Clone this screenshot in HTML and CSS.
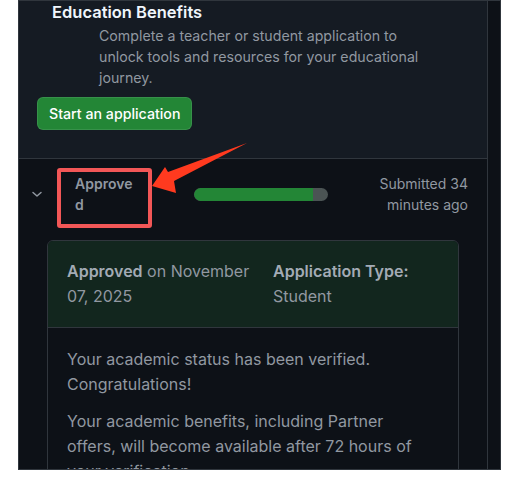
FILE: index.html
```html
<!DOCTYPE html>
<html lang="en">

<head>
    <meta charset="UTF-8">
    <meta name="viewport" content="width=device-width, initial-scale=1.0">
    <title>Education Benefits</title>
    <link rel="stylesheet" href="styles.css">
</head>

<body>
    <div class="shot">
        <div class="frame">
            <div class="box">
                <section class="intro">
                    <h2>Education Benefits</h2>
                    <p class="intro-text">Complete a teacher or student application to unlock tools and resources for your educational journey.</p>
                    <button class="btn-primary" type="button">Start an application</button>
                </section>

                <section class="app-row">
                    <div class="app-summary">
                        <svg class="chevron" width="16" height="16" viewBox="0 0 16 16" aria-hidden="true">
                            <path d="M4 6.5l4 3.5 4-3.5" fill="none" stroke="currentColor" stroke-width="1.5" stroke-linecap="round" stroke-linejoin="round"/>
                        </svg>
                        <span class="status">Approved</span>
                        <div class="progress">
                            <span class="progress-fill" style="width: 89%"></span>
                        </div>
                        <span class="submitted">Submitted 34 minutes ago</span>
                    </div>

                    <div class="app-card">
                        <div class="app-card-header">
                            <div><strong>Approved</strong> on November 07, 2025</div>
                            <div><strong>Application Type:</strong><br>Student</div>
                        </div>
                        <div class="app-card-body">
                            <p>Your academic status has been verified. Congratulations!</p>
                            <p>Your academic benefits, including Partner offers, will become available after 72 hours of your verification.</p>
                        </div>
                    </div>
                </section>
            </div>
        </div>

        <div class="mark-box"></div>
        <svg class="mark-arrow" width="528" height="492" viewBox="0 0 528 492" aria-hidden="true">
            <polygon points="152,186 165,167 168,172 247,143 174,181 176,193" fill="#ff3a1f"/>
        </svg>
    </div>
</body>

</html>
```

FILE: styles.css
```css
:root {
    --canvas: #0d1117;
    --canvas-subtle: #151b23;
    --border: #30363d;
    --text: #f0f6fc;
    --muted: #9198a1;
    --green: #238636;
    --success-bg: #12261e;
    --mark: #f25757;
}

body {
    margin: 0;
    background: #ffffff;
    font-family: 'Inter', 'Liberation Sans', sans-serif;
}

.shot {
    position: relative;
    width: 528px;
    height: 492px;
}

.frame {
    margin-left: 18px;
    width: 483px;
    height: 470px;
    box-sizing: border-box;
    background: var(--canvas);
    border: 1px solid var(--border);
    overflow: hidden;
}

.box {
    width: 468px;
    border-right: 1px solid var(--border);
    min-height: 100%;
}

.intro {
    background: var(--canvas-subtle);
    padding: 0 0 28px 33px;
    border-bottom: 1px solid var(--border);
}

.intro h2 {
    margin: 0;
    font-size: 16.5px;
    line-height: 22px;
    font-weight: 600;
    color: var(--text);
}

.intro-text {
    margin: 2px 0 9px 47px;
    width: 330px;
    font-size: 14.2px;
    line-height: 21px;
    color: var(--muted);
}

.btn-primary {
    display: block;
    margin-left: -15px;
    height: 33px;
    padding: 0 11px;
    background: var(--green);
    border: 1px solid rgba(240, 246, 252, 0.1);
    border-radius: 6px;
    color: #ffffff;
    font-family: inherit;
    font-size: 14.2px;
    font-weight: 500;
}

.app-row {
    padding: 14px 28px 0 28px;
}

.app-summary {
    display: flex;
    align-items: center;
    margin: 0 -9px 0 -18px;
}

.chevron {
    flex: none;
    color: var(--muted);
}

.status {
    width: 62px;
    margin-left: 30px;
    font-size: 14px;
    line-height: 21px;
    font-weight: 600;
    color: var(--muted);
    word-break: break-all;
}

.progress {
    width: 134px;
    height: 13px;
    margin-left: 57px;
    border-radius: 7px;
    background: #4b5454;
    overflow: hidden;
}

.progress-fill {
    display: block;
    height: 100%;
    background: var(--green);
    border-radius: 7px 0 0 7px;
}

.submitted {
    margin-left: auto;
    width: 100px;
    text-align: right;
    font-size: 14px;
    line-height: 21px;
    color: var(--muted);
}

.app-card {
    margin-top: 25px;
    border: 1px solid var(--border);
    border-radius: 6px;
    overflow: hidden;
}

.app-card-header {
    display: grid;
    grid-template-columns: 186px 1fr;
    gap: 20px;
    padding: 18px 19px 18px;
    background: var(--success-bg);
    border-bottom: 1px solid var(--border);
    font-size: 16px;
    line-height: 25px;
    color: var(--muted);
}

.app-card-header strong {
    font-weight: 600;
    color: #a3abb5;
}

.app-card-body {
    padding: 19px 30px 0 19px;
    font-size: 16px;
    line-height: 25px;
    color: var(--muted);
}

.app-card-body p {
    margin: 0 0 12px;
}

.mark-box {
    position: absolute;
    left: 57px;
    top: 168px;
    width: 95px;
    height: 60px;
    box-sizing: border-box;
    border: 4px solid var(--mark);
    border-radius: 3px;
}

.mark-arrow {
    position: absolute;
    left: 0;
    top: 0;
}
```
